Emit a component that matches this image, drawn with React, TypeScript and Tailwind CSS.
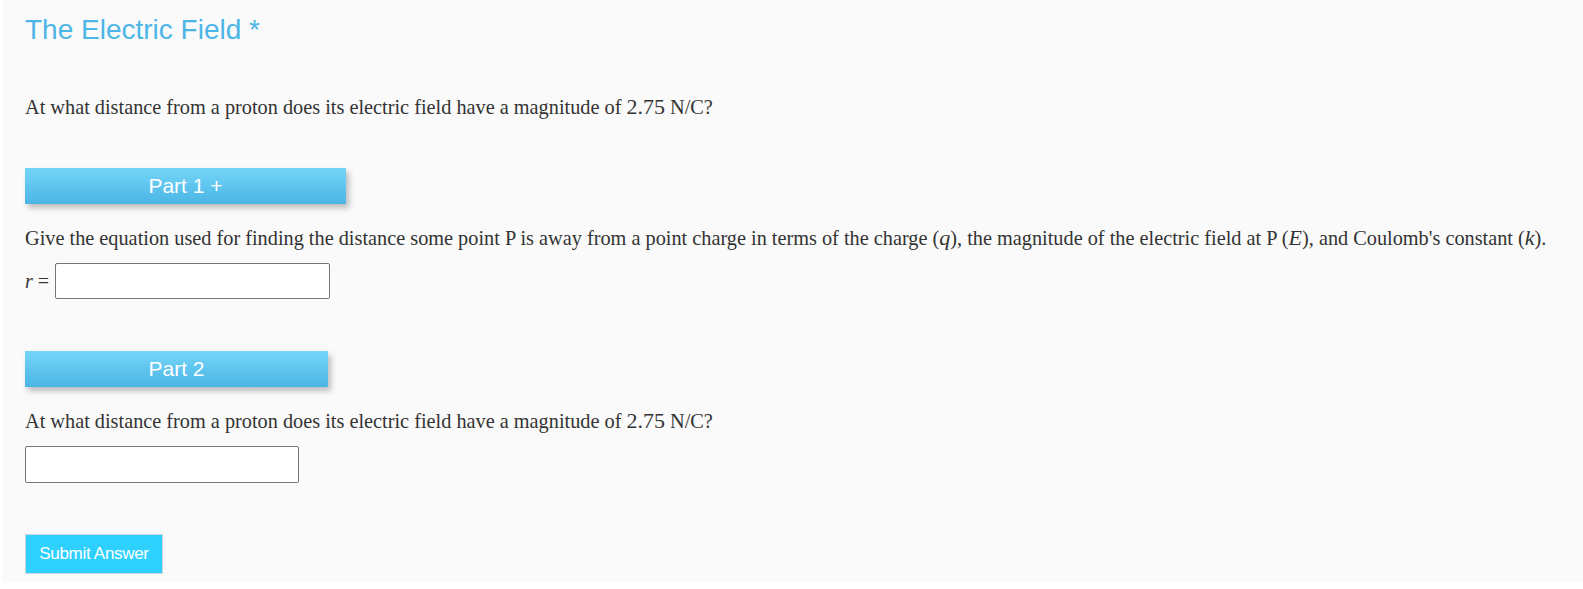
import React from "react";

const serif = { fontFamily: '"Liberation Serif", "Times New Roman", serif' };

function Bar({ label, width }: { label: string; width: string }) {
  return (
    <div
      className={`${width} h-[36px] flex items-center justify-center text-white text-[21px] bg-gradient-to-b from-[#74d5f8] to-[#4ab5e5] shadow-[3px_4px_6px_rgba(0,0,0,0.25)]`}
      style={{ fontFamily: '"Liberation Sans", Arial, sans-serif' }}
    >
      {label}
    </div>
  );
}

function M({ children, italic }: { children: React.ReactNode; italic?: boolean }) {
  return <span className={`text-[22px] leading-none ${italic ? "italic" : ""}`}>{children}</span>;
}

export default function App() {
  return (
    <div className="w-[1583px] h-[589px] bg-white">
      <div className="ml-[3px] h-[582px] bg-[#fafafa] pl-[22px] pt-[12px] text-[#333]">
        <h1
          className="text-[28px] leading-[36px] text-[#4cb6e7]"
          style={{ fontFamily: '"Liberation Sans", Arial, sans-serif' }}
        >
          The Electric Field *
        </h1>
        <p className="mt-[45px] text-[20.3px] leading-[28px]" style={serif}>
          At what distance from a proton does its electric field have a magnitude of <M>2.75</M> N/C?
        </p>
        <div className="mt-[47px]">
          <Bar label="Part 1 +" width="w-[321px]" />
        </div>
        <p className="mt-[20px] text-[20.3px] leading-[28px]" style={serif}>
          Give the equation used for finding the distance some point P is away from a point charge in terms of the
          charge (<M italic>q</M>), the magnitude of the electric field at P (<M italic>E</M>), and Coulomb's constant (
          <M italic>k</M>).
        </p>
        <div className="mt-[11px] flex items-center">
          <span className="text-[20px] w-[30px]" style={serif}>
            <i>r</i> =
          </span>
          <input className="w-[275px] h-[36px] bg-white border border-[#767676] rounded-[2px]" />
        </div>
        <div className="mt-[52px]">
          <Bar label="Part 2" width="w-[303px]" />
        </div>
        <p className="mt-[20px] text-[20.3px] leading-[28px]" style={serif}>
          At what distance from a proton does its electric field have a magnitude of <M>2.75</M> N/C?
        </p>
        <input className="mt-[11px] block w-[274px] h-[37px] bg-white border border-[#767676] rounded-[2px]" />
        <button
          className="mt-[51px] block w-[138px] h-[40px] bg-[#2ed0fe] border border-[#c9d6dd] text-white text-[17px] tracking-[-0.3px]"
          style={{ fontFamily: '"Liberation Sans", Arial, sans-serif' }}
        >
          Submit Answer
        </button>
      </div>
    </div>
  );
}
